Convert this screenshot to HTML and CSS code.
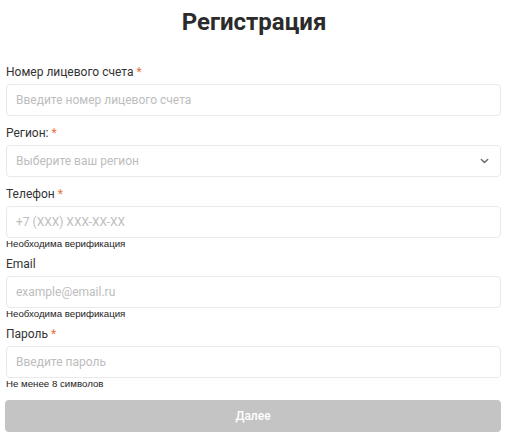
FILE: index.html
```html
<!DOCTYPE html>
<html lang="ru">
<head>
<meta charset="utf-8">
<title>Регистрация</title>
<link rel="stylesheet" href="styles.css">
</head>
<body>
<form class="form">
  <h1 class="title">Регистрация</h1>
  <div class="field">
    <label class="label">Номер лицевого счета <span class="req">*</span></label>
    <input class="input" type="text" placeholder="Введите номер лицевого счета">
  </div>
  <div class="field">
    <label class="label">Регион: <span class="req">*</span></label>
    <div class="select">
      <span class="select-text">Выберите ваш регион</span>
      <svg class="chevron" width="9" height="6" viewBox="0 0 9 6"><path d="M1.3 1.4 L4.5 4.4 L7.7 1.4" fill="none" stroke="#666" stroke-width="1.4" stroke-linecap="round" stroke-linejoin="round"/></svg>
    </div>
  </div>
  <div class="field field-hint">
    <label class="label">Телефон <span class="req">*</span></label>
    <input class="input" type="text" placeholder="+7 (XXX) XXX-XX-XX">
    <div class="hint">Необходима верификация</div>
  </div>
  <div class="field field-hint">
    <label class="label">Email</label>
    <input class="input" type="text" placeholder="example@email.ru">
    <div class="hint">Необходима верификация</div>
  </div>
  <div class="field field-last">
    <label class="label">Пароль <span class="req">*</span></label>
    <input class="input" type="password" placeholder="Введите пароль">
    <div class="hint">Не менее 8 символов</div>
  </div>
  <button class="btn" type="button">Далее</button>
</form>
</body>
</html>
```
FILE: styles.css
```css
* { box-sizing: border-box; }
html, body { margin: 0; padding: 0; background: #fff; }
body { font-family: Roboto, "Noto Sans", sans-serif; color: #333; }
.form { width: 496px; margin: 0 0 0 6px; display: flex; flex-direction: column; }
.title {
  margin: 0 0 27px;
  padding-top: 7px;
  font-size: 24px;
  line-height: 30px;
  font-weight: 700;
  text-align: center;
  color: #2b2b2b;
}
.field { display: flex; flex-direction: column; margin-bottom: 9px; }
.field-hint { margin-bottom: 6px; }
.field-last { margin-bottom: 10px; }
.label {
  font-size: 12px;
  line-height: 16px;
  margin-bottom: 4px;
  color: #333;
}
.req { color: #e8733c; }
.input, .select {
  width: 495px;
  height: 32px;
  border: 1px solid #e9e9e9;
  border-radius: 4px;
  padding: 0 9px;
  font-family: Roboto, "Noto Sans", sans-serif;
  font-size: 12px;
  color: #333;
  background: #fff;
  outline: none;
}
.input::placeholder { color: #bdbdbd; }
.select { display: flex; align-items: center; justify-content: space-between; padding-right: 11px; }
.select-text { color: #bdbdbd; }
.chevron { display: block; }
.hint {
  font-family: "Liberation Sans", Arial, sans-serif;
  font-size: 9.7px;
  line-height: 12px;
  color: #222;
}
.btn {
  width: 496px;
  height: 32px;
  margin-left: -1px;
  border: none;
  border-radius: 4px;
  background: #c4c4c4;
  color: #fff;
  font-family: Roboto, "Noto Sans", sans-serif;
  font-size: 12px;
  font-weight: 500;
}
```
